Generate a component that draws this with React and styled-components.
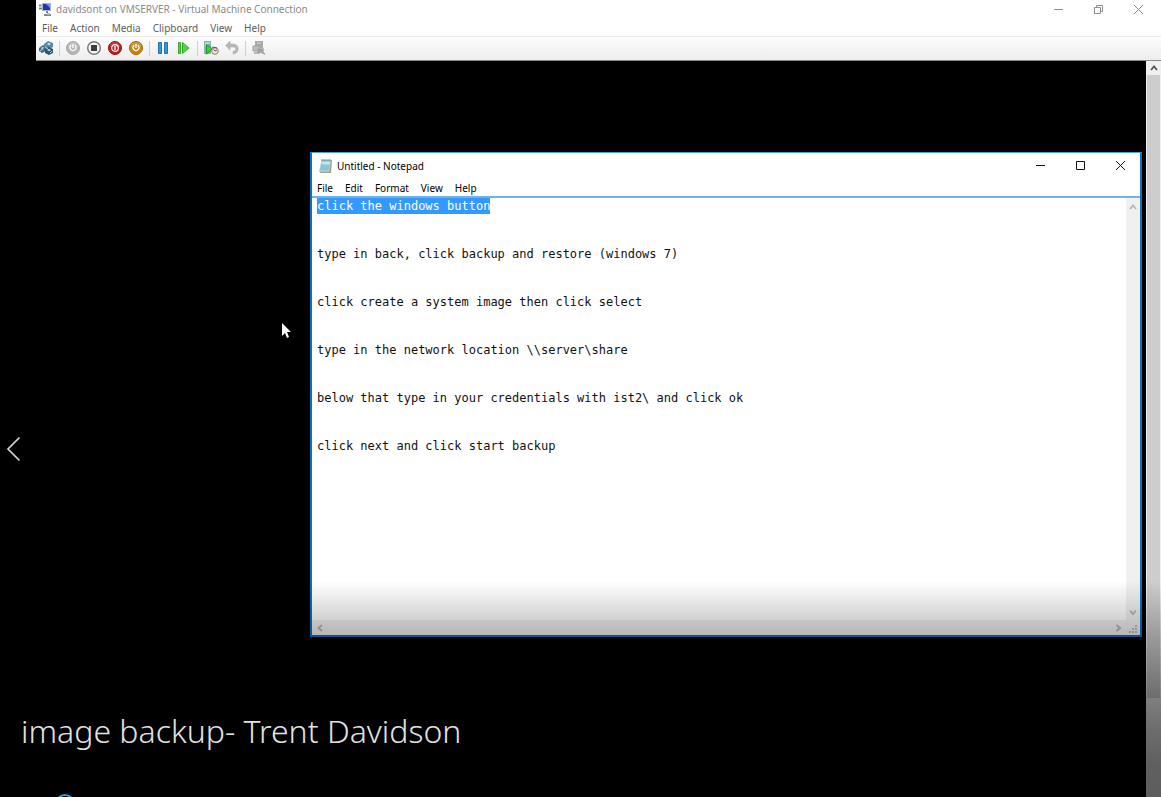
import React, { useEffect, useRef } from "react";
import styled, { createGlobalStyle } from "styled-components";

const GlobalStyle = createGlobalStyle`
  * { box-sizing: border-box; }
  body { margin: 0; background: #000; overflow: hidden; }
  button { border: 0; padding: 0; margin: 0; background: none; font: inherit; color: inherit; }
  svg { display: block; }
`;

const Page = styled.main`
  position: relative;
  display: flex;
  height: 100vh;
  overflow: hidden;
  background: #000;
  font-family: "Noto Sans", "Open Sans", sans-serif;
  font-size: 10px;
  line-height: 16px;
`;

const Rail = styled.nav`
  flex: 0 0 36px;
  padding-top: 436px;
`;

const PreviousButton = styled.button`
  display: block;
  margin-left: 6px;
`;

const ConnectionWindow = styled.section`
  flex: 1;
  min-width: 0;
  display: flex;
  flex-direction: column;
`;

const TitleBar = styled.header`
  display: flex;
  align-items: center;
  justify-content: space-between;
  background: #fff;
  color: ${(p) => (p.$active ? "#000" : "#8a8a8a")};
  height: ${(p) => (p.$active ? 25 : 18)}px;
  padding: ${(p) => (p.$active ? "0 14px 0 6px" : "0 17px 0 2px")};
`;

const TitleLabel = styled.h1`
  display: flex;
  align-items: center;
  gap: 4px;
  margin: 0;
  font-size: 10px;
  font-weight: 400;
  white-space: nowrap;
`;

const WindowControls = styled.div`
  display: flex;
  gap: 29px;
`;

const MenuBar = styled.nav`
  display: flex;
  align-items: center;
  gap: 12px;
  height: 18px;
  padding-top: 1px;
  padding-left: ${(p) => (p.$active ? 5 : 6)}px;
  background: #fff;
  color: ${(p) => (p.$active ? "#000" : "#5c5c5c")};
`;

const Toolbar = styled.div`
  display: flex;
  align-items: center;
  gap: 5px;
  height: 25px;
  padding: 0 0 1px 2px;
  border-top: 1px solid #ececec;
  border-bottom: 1px solid #8a8a8a;
  background: linear-gradient(#fdfdfd, #ededed);
`;

const Separator = styled.span`
  width: 1px;
  height: 15px;
  background: #cfcfcf;
`;

const Viewport = styled.div`
  flex: 1;
  min-height: 0;
  display: flex;
`;

const Desktop = styled.div`
  position: relative;
  flex: 1;
  min-width: 0;
`;

const OuterScrollbar = styled.div`
  flex: 0 0 15px;
  display: flex;
  flex-direction: column;
  padding: 0 1px;
  background: #f0f0f0;
`;

const OuterArrow = styled.button`
  height: 14px;
  display: grid;
  place-items: center;
`;

const OuterThumb = styled.div`
  height: 623px;
  background: #cdcdcd;
`;

const NotepadWindow = styled.section`
  position: absolute;
  top: 91px;
  right: 4px;
  left: 274px;
  height: 485px;
  display: flex;
  flex-direction: column;
  border: 2px solid #0b6fc2;
  border-top: 1px solid #4aa3e0;
  background: #fff;
`;

const Editor = styled.div`
  flex: 1;
  min-height: 0;
  display: grid;
  grid-template-columns: 1fr 14px;
  grid-template-rows: 1fr 15px;
  border-top: 2px solid #6fb3ea;
`;

const TextArea = styled.textarea`
  display: block;
  width: 100%;
  height: 100%;
  border: 0;
  outline: 0;
  resize: none;
  overflow: hidden;
  margin: 0;
  padding: 0 5px;
  background: #fff;
  color: #111;
  caret-color: transparent;
  font-family: "DejaVu Sans Mono", monospace;
  font-size: 12px;
  line-height: 16px;
  white-space: pre;
  &::selection { background: #3399ff; color: #fff; }
`;

const ScrollTrack = styled.div`
  display: flex;
  flex-direction: ${(p) => (p.$vertical ? "column" : "row")};
  align-items: center;
  justify-content: space-between;
  padding: ${(p) => (p.$vertical ? "5px 0 4px" : "0 4px")};
  background: #f0f0f0;
`;

const ResizeCorner = styled.div`
  display: grid;
  place-items: end center;
  padding-bottom: 1px;
  background: #f0f0f0;
`;

const Pointer = styled.svg`
  position: absolute;
  left: 245px;
  top: 261px;
`;

const Shade = styled.div`
  position: absolute;
  inset: auto 0 0 0;
  height: 216px;
  pointer-events: none;
  background: linear-gradient(
    rgba(0, 0, 0, 0) 0%,
    rgba(0, 0, 0, 0.17) 17%,
    rgba(0, 0, 0, 0.25) 26%,
    rgba(0, 0, 0, 0.47) 54%,
    rgba(0, 0, 0, 0.55) 69%,
    rgba(0, 0, 0, 0.6) 85%,
    rgba(0, 0, 0, 0.61) 100%
  );
`;

const Caption = styled.h2`
  position: absolute;
  left: 21px;
  bottom: 44px;
  margin: 0;
  color: #e2e2e2;
  font-size: 32px;
  line-height: 44px;
  font-weight: 300;
  white-space: nowrap;
`;

const SeekHandle = styled.span`
  position: absolute;
  left: 55px;
  bottom: -17px;
  width: 20px;
  height: 20px;
  border: 2px solid #3a96dd;
  border-radius: 50%;
`;

const arrowPaths = {
  up: "M1 6 4 2.5 7 6",
  down: "M1 2.5 4 6 7 2.5",
  left: "M6 1 2.5 4 6 7",
  right: "M2.5 1 6 4 2.5 7",
};

const Arrow = ({ direction, color = "#b5b5b5" }) => (
  <svg width="8" height="8" viewBox="0 0 8 8" fill="none" stroke={color} strokeWidth="1.8">
    <path d={arrowPaths[direction]} />
  </svg>
);

const controlPaths = {
  minimize: "M1 5.5H10",
  maximize: "M1.5 1.5H9.5V9.5H1.5Z",
  restore: "M1.5 3.5H7.5V9.5H1.5ZM3.5 3.5V1.5H9.5V7.5H7.5",
  close: "M1 1 10 10M10 1 1 10",
};

const ControlButton = ({ kind, color }) => (
  <button type="button" aria-label={kind}>
    <svg width="11" height="11" viewBox="0 0 11 11" fill="none" stroke={color}>
      <path d={controlPaths[kind]} />
    </svg>
  </button>
);

const ComputerIcon = () => (
  <svg width="14" height="15" viewBox="0 0 14 15">
    <path d="M1 2h3v6H1z" fill="#c5c8cc" />
    <path d="M1 3h2v1H1zM1 6h3v1H1z" fill="#777" />
    <path d="M4 1h9v8H4z" fill="#aab4c4" />
    <path d="M5 2h7v6H5z" fill="#1b35b4" />
    <path d="M8 2h4v4z" fill="#6f92ed" />
    <path d="M8 9h2v2H8zM6 12h7v2H6z" fill="#81868d" />
    <path d="M9 11h3v2H9z" fill="#b4b8bd" />
  </svg>
);

const NotepadIcon = () => (
  <svg width="15" height="16" viewBox="0 0 15 16">
    <path d="M4 2h10l-1 13H2z" fill="#a99d85" />
    <path d="M3.500 2H13l-1.500 12H1z" fill="#9ccfd8" />
    <path d="M4 4h8l-.5 3H3.500z" fill="#c3e7ea" />
    <path d="M3.500 7h8M3 9h8M2.700 11h8" stroke="#6fb2c0" strokeWidth=".7" />
    <path d="M4 1v2M6 1v2M8 1v2M10 1v2M12 1v2" stroke="#59717a" strokeWidth=".8" />
  </svg>
);

const PowerMark = () => (
  <g fill="none" stroke="#fff" strokeWidth="1.300">
    <path d="M6 5.300a3 3 0 1 0 4 0M8 4v4" />
  </g>
);

const Disc = ({ fill, rim, children }) => (
  <>
    <circle cx="8" cy="8" r="6.500" fill={fill} stroke={rim} />
    <path d="M3 7a5 5 0 0 1 10 0" fill="#fff" opacity=".16" />
    {children}
  </>
);

const toolDrawings = {
  keys: (
    <>
      <path d="M1 8 5 5l3 2v4l-4 2-3-2z" fill="#426b85" />
      <path d="M6 4l4-3 5 2v4l-4 2-5-2z" fill="#5b8aa5" />
      <path d="M7 9l4-2 4 2v4l-4 2-4-2z" fill="#2f566d" />
      <path d="M3 8l2-1 1 1-2 1zM9 4l2-1 2 1-2 1zM9 10l2-1 2 1-2 1z" fill="#e4f4fb" />
      <path d="M2 11l3-2M7 7l3 2M12 13l2-2" stroke="#a9d1e4" />
    </>
  ),
  start: <Disc fill="#b5b5b5" rim="#a8a8a8"><PowerMark /></Disc>,
  turnOff: (
    <>
      <circle cx="8" cy="8" r="6.300" fill="#f4f4f4" stroke="#777" strokeWidth="1.400" />
      <path d="M5 5h6v6H5z" fill="#3c3c3c" />
    </>
  ),
  shutDown: (
    <Disc fill="#bb1c1c" rim="#8d1717">
      <circle cx="8" cy="8" r="3.300" fill="none" stroke="#fff" strokeWidth="1.200" />
      <path d="M8 6v4" stroke="#fff" strokeWidth="1.300" />
    </Disc>
  ),
  save: <Disc fill="#ca8613" rim="#9b690d"><PowerMark /></Disc>,
  pause: (
    <path d="M3.500 2.500h3v11h-3zM9.500 2.500h3v11h-3z" fill="#3498d8" stroke="#2473ad" />
  ),
  reset: (
    <path d="M2.500 2.500h2v11h-2zM6.500 2.500 13 8l-6.500 5.500z" fill="#55d43d" stroke="#36ac2b" />
  ),
  checkpoint: (
    <>
      <path d="M1 1h7v13H1z" fill="#7fb5c3" />
      <path d="M2 3h5M2 5h3" stroke="#e1f2f6" />
      <path d="M3.500 4.500 9.500 9l-6 5z" fill="#42d126" stroke="#23951c" />
      <circle cx="12" cy="11" r="3.300" fill="#ece7e2" stroke="#7e807b" />
      <path d="M10.500 9.500 12 11l2-1" stroke="#a43b2f" fill="none" />
      <path d="M9 7l5 1" stroke="#555" />
    </>
  ),
  revert: (
    <path d="M6 1 1.500 5.500 6 10V7h3.500c3 0 3 4-.5 4.500V14c7-.5 7-10 0-10H6z" fill="#b8b8b8" stroke="#a7a7a7" strokeWidth=".5" />
  ),
  session: (
    <>
      <path d="M4 1h8v7H4z" fill="#aaa" />
      <path d="M2 6h7v5H2z" fill="#bcbcbc" stroke="#a4a4a4" />
      <path d="M7 9h5v3H7zM10 12l4 2M3 13h6" fill="#a0a0a0" stroke="#a4a4a4" strokeWidth="1.400" />
      <path d="M6 3h4" stroke="#d3d3d3" />
    </>
  ),
};

const ToolButton = ({ name, label }) => (
  <button type="button" aria-label={label}>
    <svg width="16" height="16" viewBox="0 0 16 16">{toolDrawings[name]}</svg>
  </button>
);

const toolGroups = [
  [["keys", "Ctrl+Alt+Delete"]],
  [["start", "Start"], ["turnOff", "Turn off"], ["shutDown", "Shut down"], ["save", "Save"]],
  [["pause", "Pause"], ["reset", "Reset"]],
  [["checkpoint", "Checkpoint"], ["revert", "Revert"]],
  [["session", "Enhanced session"]],
];

const Menu = ({ items, active }) => (
  <MenuBar $active={active}>
    {items.map((item) => <button type="button" key={item}>{item}</button>)}
  </MenuBar>
);

const firstLine = "click the windows button";
const note = [
  firstLine,
  "type in back, click backup and restore (windows 7)",
  "click create a system image then click select",
  "type in the network location \\\\server\\share",
  "below that type in your credentials with ist2\\ and click ok",
  "click next and click start backup",
].join("\n\n\n");

function Notepad() {
  const editor = useRef(null);

  useEffect(() => {
    editor.current.focus({ preventScroll: true });
    editor.current.setSelectionRange(0, firstLine.length);
  }, []);

  return (
    <NotepadWindow>
      <TitleBar $active>
        <TitleLabel as="h2"><NotepadIcon />Untitled - Notepad</TitleLabel>
        <WindowControls>
          {["minimize", "maximize", "close"].map((kind) => (
            <ControlButton key={kind} kind={kind} color="#111" />
          ))}
        </WindowControls>
      </TitleBar>
      <Menu active items={["File", "Edit", "Format", "View", "Help"]} />
      <Editor>
        <TextArea ref={editor} aria-label="Text editor" defaultValue={note} spellCheck={false} />
        <ScrollTrack $vertical>
          <button type="button" aria-label="Scroll up"><Arrow direction="up" /></button>
          <button type="button" aria-label="Scroll down"><Arrow direction="down" /></button>
        </ScrollTrack>
        <ScrollTrack>
          <button type="button" aria-label="Scroll left"><Arrow direction="left" /></button>
          <button type="button" aria-label="Scroll right"><Arrow direction="right" /></button>
        </ScrollTrack>
        <ResizeCorner>
          <svg width="9" height="9" viewBox="0 0 9 9" fill="#bbb">
            <path d="M6 0h2v2H6zM3 3h2v2H3zM6 3h2v2H6zM0 6h2v2H0zM3 6h2v2H3zM6 6h2v2H6z" />
          </svg>
        </ResizeCorner>
      </Editor>
    </NotepadWindow>
  );
}

export default function App() {
  return (
    <Page>
      <GlobalStyle />
      <Rail>
        <PreviousButton type="button" aria-label="Previous">
          <svg width="16" height="26" viewBox="0 0 16 26" fill="none" stroke="#d4d4d4" strokeWidth="1.700">
            <path d="M13.500 1.500 2 13 13.500 24.500" />
          </svg>
        </PreviousButton>
      </Rail>
      <ConnectionWindow>
        <TitleBar>
          <TitleLabel>
            <ComputerIcon />davidsont on VMSERVER - Virtual Machine Connection
          </TitleLabel>
          <WindowControls>
            {["minimize", "restore", "close"].map((kind) => (
              <ControlButton key={kind} kind={kind} color="#8d8d8d" />
            ))}
          </WindowControls>
        </TitleBar>
        <Menu items={["File", "Action", "Media", "Clipboard", "View", "Help"]} />
        <Toolbar>
          {toolGroups.map((group, index) => (
            <React.Fragment key={index}>
              {index > 0 && <Separator />}
              {group.map(([name, label]) => <ToolButton key={name} name={name} label={label} />)}
            </React.Fragment>
          ))}
        </Toolbar>
        <Viewport>
          <Desktop>
            <Notepad />
            <Pointer width="12" height="18" viewBox="0 0 12 18">
              <path d="M1 1v13l3-3 2 5 2-1-2-5h4z" fill="#fff" />
            </Pointer>
          </Desktop>
          <OuterScrollbar>
            <OuterArrow type="button" aria-label="Scroll up"><Arrow direction="up" color="#555" /></OuterArrow>
            <OuterThumb />
          </OuterScrollbar>
        </Viewport>
      </ConnectionWindow>
      <Shade />
      <Caption>image backup- Trent Davidson</Caption>
      <SeekHandle />
    </Page>
  );
}
